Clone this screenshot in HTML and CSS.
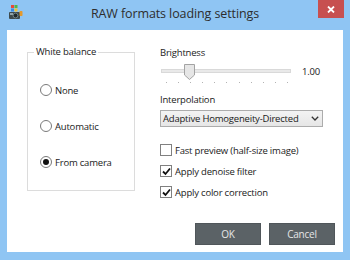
FILE: index.html
```html
<!DOCTYPE html>
<html>
<head>
  <title>RAW formats loading settings</title>
  <link rel="stylesheet" href="styles.css">
</head>
<body>
  <div class="window">
    <div class="titlebar">
      <svg class="app-icon" width="15" height="15" viewBox="0 0 15 15">
        <rect x="3" y="0" width="3" height="3" fill="#e8483a"/>
        <rect x="6.5" y="0" width="3" height="3" fill="#4fb84a"/>
        <rect x="3" y="3.5" width="3" height="3" fill="#3a8be0"/>
        <rect x="6.5" y="3.5" width="3" height="3" fill="#f2c230"/>
        <rect x="1" y="7" width="11" height="7" rx="1" fill="#3d4a4c"/>
        <rect x="2" y="8" width="3" height="2" fill="#8fa3a6"/>
        <circle cx="7.5" cy="10.5" r="2.4" fill="#1f2a2c" stroke="#7f9598" stroke-width="0.8"/>
        <rect x="11.5" y="6" width="3" height="5" rx="0.8" fill="#e59a2c"/>
      </svg>
      <div class="title">RAW formats loading settings</div>
      <div class="close">
        <svg width="8" height="7" viewBox="0 0 8 7">
          <path d="M1 0.5 L7 6.5 M7 0.5 L1 6.5" stroke="#fff" stroke-width="1.8"/>
        </svg>
      </div>
    </div>

    <div class="client">
      <div class="content">
        <fieldset class="group">
          <legend>White balance</legend>
          <div class="radio-row"><span class="radio"></span>None</div>
          <div class="radio-row"><span class="radio"></span>Automatic</div>
          <div class="radio-row"><span class="radio checked"></span>From camera</div>
        </fieldset>

        <div class="options">
          <div class="label">Brightness</div>
          <div class="slider-row">
            <div class="slider">
              <div class="track"></div>
              <svg class="thumb" width="11" height="16" viewBox="0 0 11 16">
                <path d="M0.5 0.5 H10.5 V11 L5.5 15.5 L0.5 11 Z" fill="#e6e6e6" stroke="#a3a3a3"/>
              </svg>
              <div class="ticks">
                <span></span><span></span><span></span><span></span><span></span><span></span>
                <span></span><span></span><span></span><span></span><span></span>
              </div>
            </div>
            <div class="value">1.00</div>
          </div>

          <div class="label label-gap">Interpolation</div>
          <div class="select">
            <span>Adaptive Homogeneity-Directed</span>
            <svg width="8" height="5" viewBox="0 0 8 5">
              <path d="M0.8 0.8 L4 4 L7.2 0.8" fill="none" stroke="#333" stroke-width="1.3"/>
            </svg>
          </div>

          <div class="checks">
            <div class="check-row"><span class="checkbox"></span>Fast preview (half-size image)</div>
            <div class="check-row">
              <span class="checkbox">
                <svg width="9" height="9" viewBox="0 0 9 9"><path d="M1 4.5 L3.5 7 L8 1.5" fill="none" stroke="#111" stroke-width="1.8"/></svg>
              </span>Apply denoise filter
            </div>
            <div class="check-row">
              <span class="checkbox">
                <svg width="9" height="9" viewBox="0 0 9 9"><path d="M1 4.5 L3.5 7 L8 1.5" fill="none" stroke="#111" stroke-width="1.8"/></svg>
              </span>Apply color correction
            </div>
          </div>
        </div>
      </div>

      <div class="buttons">
        <button class="button">OK</button>
        <button class="button">Cancel</button>
      </div>
    </div>
  </div>
</body>
</html>
```

FILE: styles.css
```css
body {
  margin: 0;
  background-color: #8fc5f3;
  font-family: "Open Sans", "Noto Sans", sans-serif;
  font-size: 9.5px;
  letter-spacing: -0.2px;
  color: #1a1a1a;
}

.window {
  height: 260px;
  display: flex;
  flex-direction: column;
}

.titlebar {
  height: 30px;
  display: grid;
  grid-template-columns: 1fr auto 1fr;
  align-items: start;
}

.app-icon {
  margin: 5px 0 0 8px;
}

.title {
  font-size: 12.5px;
  letter-spacing: -0.1px;
  line-height: 28px;
  color: #2d2d2d;
}

.close {
  justify-self: end;
  width: 26px;
  height: 18px;
  margin-right: 6px;
  background-color: #c75050;
  display: flex;
  align-items: center;
  justify-content: center;
}

.client {
  background-color: #fff;
  margin: 0 7px;
  height: 222px;
  display: flex;
  flex-direction: column;
}

.content {
  display: flex;
  padding: 15px 0 0 20px;
}

.group {
  margin: 0;
  width: 108px;
  height: 146px;
  box-sizing: border-box;
  border: 1px solid #dcdcdc;
  padding: 24px 0 0 6px;
}

.group legend {
  padding: 0 2px;
  line-height: 14px;
}

.radio-row {
  display: flex;
  align-items: center;
  gap: 3px;
  height: 14px;
  margin: 0 0 22px 6px;
}

.radio {
  width: 10px;
  height: 10px;
  border: 1px solid #7a7a7a;
  border-radius: 50%;
  display: flex;
  align-items: center;
  justify-content: center;
}

.radio.checked::after {
  content: "";
  width: 6px;
  height: 6px;
  border-radius: 50%;
  background-color: #111;
}

.options {
  margin-left: 25px;
  margin-top: 1px;
  width: 163px;
}

.label {
  line-height: 14px;
}

.label-gap {
  margin-top: 10px;
}

.slider-row {
  display: flex;
  margin-top: 4px;
  height: 19px;
}

.slider {
  position: relative;
  width: 130px;
  margin-left: 1px;
}

.track {
  margin-top: 5px;
  height: 2px;
  border: 1px solid #d9d9d9;
  background-color: #e9e9e9;
}

.thumb {
  position: absolute;
  left: 23px;
  top: 0;
}

.ticks {
  display: flex;
  justify-content: space-between;
  margin: 9px 3px 0 5px;
}

.ticks span {
  width: 1px;
  height: 1px;
  background-color: #b3b3b3;
}

.value {
  margin-left: 11px;
  line-height: 16px;
}

.select {
  margin-top: 3px;
  height: 17px;
  box-sizing: border-box;
  border: 1px solid #acacac;
  background: linear-gradient(#f3f3f3, #e6e6e6);
  display: flex;
  align-items: center;
  justify-content: space-between;
  padding: 0 3px 0 2px;
  white-space: nowrap;
}

.checks {
  margin-top: 16px;
  display: flex;
  flex-direction: column;
  gap: 7px;
}

.check-row {
  display: flex;
  align-items: center;
  gap: 3px;
  height: 14px;
}

.checkbox {
  width: 10px;
  height: 10px;
  border: 1px solid #808080;
  display: flex;
  align-items: center;
  justify-content: center;
}

.buttons {
  margin-top: auto;
  padding: 0 8px 7px 0;
  display: flex;
  justify-content: flex-end;
  gap: 8px;
}

.button {
  width: 66px;
  height: 22px;
  border: 1px solid #50565a;
  background-color: #5b6266;
  color: #e6e6e6;
  font-family: "Open Sans", "Noto Sans", sans-serif;
  font-size: 10px;
  letter-spacing: -0.2px;
  padding: 0;
}
```
